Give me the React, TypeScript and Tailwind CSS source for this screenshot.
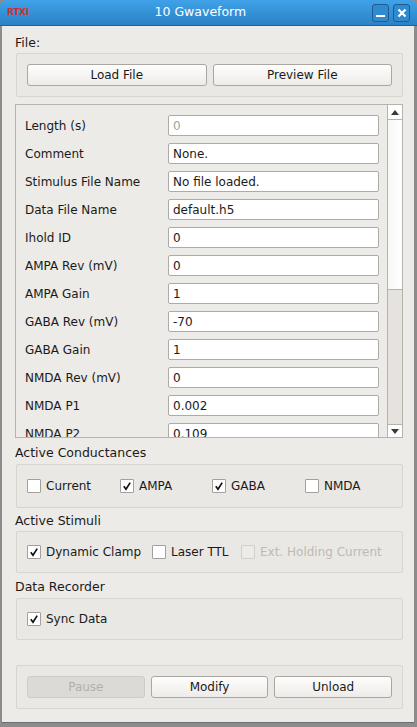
import React from 'react'

const font = { fontFamily: '"DejaVu Sans", "Liberation Sans", sans-serif' }

const fields: { label: string; value: string; disabled?: boolean }[] = [
  { label: 'Length (s)', value: '0', disabled: true },
  { label: 'Comment', value: 'None.' },
  { label: 'Stimulus File Name', value: 'No file loaded.' },
  { label: 'Data File Name', value: 'default.h5' },
  { label: 'Ihold ID', value: '0' },
  { label: 'AMPA Rev (mV)', value: '0' },
  { label: 'AMPA Gain', value: '1' },
  { label: 'GABA Rev (mV)', value: '-70' },
  { label: 'GABA Gain', value: '1' },
  { label: 'NMDA Rev (mV)', value: '0' },
  { label: 'NMDA P1', value: '0.002' },
  { label: 'NMDA P2', value: '0.109' },
]

const Check = ({ checked, disabled }: { checked?: boolean; disabled?: boolean }) => (
  <span
    className={`w-[14px] h-[14px] shrink-0 flex items-center justify-center rounded-[1px] border ${
      disabled ? 'border-[#d2cfcb] bg-[#edebe7]' : 'border-[#a3a09c] bg-white'
    }`}
  >
    {checked && (
      <svg width="10" height="10" viewBox="0 0 10 10">
        <path d="M1.8 5.2 L4 8.2 L8.2 1.6" fill="none" stroke="#111" strokeWidth="1.7" />
      </svg>
    )}
  </span>
)

const Button = ({ label, disabled, className = '' }: { label: string; disabled?: boolean; className?: string }) => (
  <div
    className={`h-[22px] flex items-center justify-center rounded-[3px] border text-[12px] ${
      disabled
        ? 'border-[#cfccc8] bg-[#dcdad6] text-[#b3b0ac]'
        : 'border-[#aaa7a3] bg-gradient-to-b from-[#fdfdfc] to-[#eeece9] text-[#1a1a1a]'
    } ${className}`}
  >
    {label}
  </div>
)

const Group = ({ children, className = '' }: { children: React.ReactNode; className?: string }) => (
  <div className={`w-[387px] ml-[1px] rounded-[2px] border border-[#d8d5d1] bg-[#eae8e4] ${className}`}>{children}</div>
)

const CheckItem = ({ label, checked, disabled, className = '' }: { label: string; checked?: boolean; disabled?: boolean; className?: string }) => (
  <div className={`flex items-center gap-[5px] ${className}`}>
    <Check checked={checked} disabled={disabled} />
    <span className={disabled ? 'text-[#bdbab6]' : 'text-[#1a1a1a]'}>{label}</span>
  </div>
)

export default function App() {
  return (
    <div className="w-[417px] h-[727px] bg-[#8c8c8c] flex flex-col text-[12px] text-[#1a1a1a]" style={font}>
      {/* title bar */}
      <div className="h-[26px] shrink-0 rounded-t-[6px] bg-gradient-to-b from-[#3fa2e8] to-[#2b82c6] border-b border-[#1f5f96] flex items-center relative">
        <span className="ml-[7px] text-[9px] font-bold text-[#c9302c] tracking-[-0.3px]">RTXI</span>
        <span className="flex-1 text-center text-white text-[12.5px]">10 Gwaveform</span>
        <div className="flex gap-[4px] mr-[7px]">
          <div className="w-[17px] h-[18px] rounded-[3px] border border-[#1c5c91] bg-[#2f8ad0] flex items-end justify-center pb-[4px]">
            <span className="w-[9px] h-[2px] bg-white" />
          </div>
          <div className="w-[17px] h-[18px] rounded-[3px] border border-[#1c5c91] bg-[#2f8ad0] flex items-center justify-center">
            <svg width="10" height="10" viewBox="0 0 10 10">
              <path d="M1.5 1.5 L8.5 8.5 M8.5 1.5 L1.5 8.5" stroke="white" strokeWidth="2.2" />
            </svg>
          </div>
        </div>
      </div>

      {/* window body */}
      <div className="flex-1 ml-[2px] mr-[3px] mb-[4px] bg-[#edebe7] border-b border-[#6e6e6e] flex flex-col pl-[13px]">
        <div className="mt-[9px] h-[16px] leading-[16px] text-[12.5px]">File:</div>
        <Group className="mt-[2px] h-[44px] flex items-center gap-[6px] px-[10px]">
          <Button label="Load File" className="flex-1" />
          <Button label="Preview File" className="flex-1" />
        </Group>

        {/* scroll area */}
        <div className="mt-[7px] w-[388px] h-[334px] border border-[#b6b3af] flex overflow-hidden">
          <div className="flex-1 overflow-hidden pt-[10px] pl-[9px] flex flex-col gap-[7px]">
            {fields.map((f) => (
              <div key={f.label} className="flex items-center h-[21px] shrink-0">
                <span className="w-[143px] text-[12px]">{f.label}</span>
                <div
                  className={`w-[211px] h-[21px] rounded-[2px] border border-[#aeaba7] bg-white flex items-center pl-[4px] ${
                    f.disabled ? 'text-[#a5a29e]' : 'text-[#1a1a1a]'
                  }`}
                >
                  {f.value}
                </div>
              </div>
            ))}
          </div>
          <div className="w-[15px] border-l border-[#b6b3af] flex flex-col">
            <div className="h-[15px] border-b border-[#b6b3af] bg-white flex items-center justify-center">
              <svg width="8" height="5" viewBox="0 0 8 5">
                <path d="M0 5 L4 0 L8 5 Z" fill="#3a3a3a" />
              </svg>
            </div>
            <div className="h-[170px] bg-gradient-to-r from-[#f8f8f7] to-[#ffffff] border-b border-[#b6b3af]" />
            <div className="flex-1 bg-[#e6e3df]" />
            <div className="h-[13px] border-t border-[#b6b3af] bg-white flex items-center justify-center">
              <svg width="8" height="5" viewBox="0 0 8 5">
                <path d="M0 0 L8 0 L4 5 Z" fill="#3a3a3a" />
              </svg>
            </div>
          </div>
        </div>

        <div className="mt-[7px] h-[16px] leading-[16px] text-[12.5px]">Active Conductances</div>
        <Group className="mt-[3px] h-[44px] flex items-center pl-[10px]">
          <CheckItem label="Current" className="w-[93px]" />
          <CheckItem label="AMPA" checked className="w-[92px]" />
          <CheckItem label="GABA" checked className="w-[93px]" />
          <CheckItem label="NMDA" />
        </Group>

        <div className="mt-[5px] h-[16px] leading-[16px] text-[12.5px]">Active Stimuli</div>
        <Group className="mt-[2px] h-[42px] flex items-center pl-[10px]">
          <CheckItem label="Dynamic Clamp" checked className="w-[125px]" />
          <CheckItem label="Laser TTL" className="w-[89px]" />
          <CheckItem label="Ext. Holding Current" disabled />
        </Group>

        <div className="mt-[6px] h-[16px] leading-[16px] text-[12.5px]">Data Recorder</div>
        <Group className="mt-[3px] h-[42px] flex items-center pl-[10px]">
          <CheckItem label="Sync Data" checked />
        </Group>

        <Group className="mt-[25px] h-[44px] flex items-center gap-[6px] px-[10px]">
          <Button label="Pause" disabled className="flex-1" />
          <Button label="Modify" className="flex-1" />
          <Button label="Unload" className="flex-1" />
        </Group>
      </div>
    </div>
  )
}
